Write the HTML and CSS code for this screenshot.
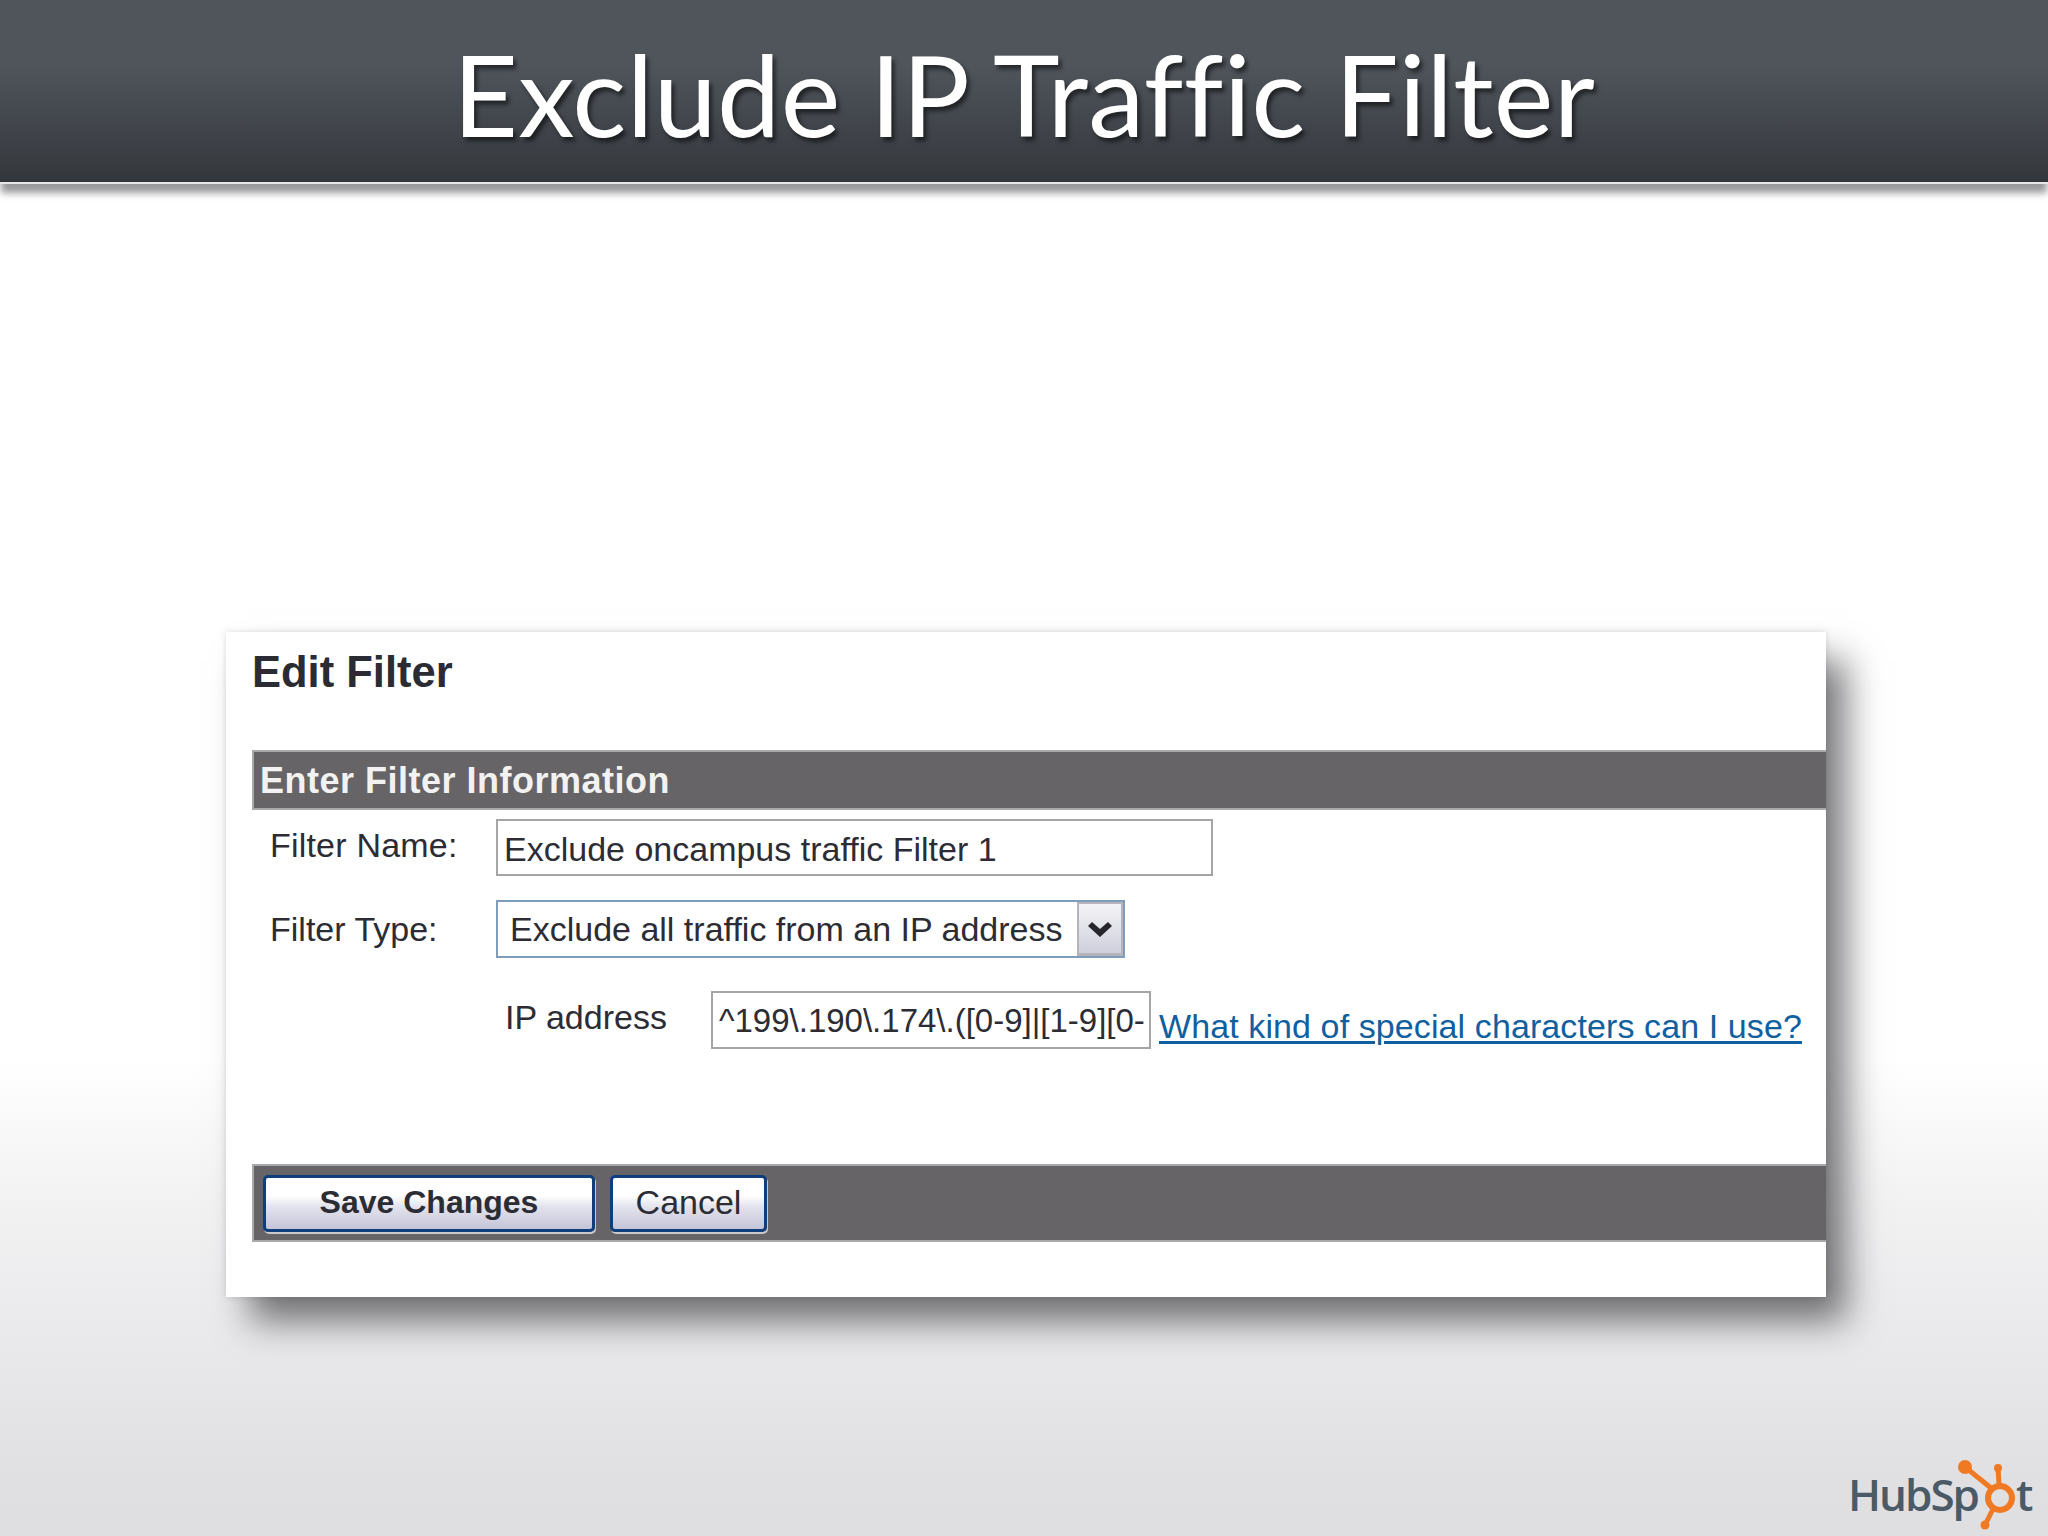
FILE: index.html
```html
<!DOCTYPE html>
<html>
<head>
    <title>Exclude IP Traffic Filter</title>
    <link rel="stylesheet" href="styles.css">
</head>
<body>
    <header class="slide-head">
        <h1>Exclude IP Traffic Filter</h1>
    </header>

    <section class="card">
        <h2 class="card-title">Edit Filter</h2>
        <div class="bar info-bar">Enter Filter Information</div>

        <div class="row name-row">
            <span class="label name-label">Filter Name:</span>
            <div class="field name-field">Exclude oncampus traffic Filter 1</div>
        </div>

        <div class="row type-row">
            <span class="label">Filter Type:</span>
            <div class="select">
                <span class="select-text">Exclude all traffic from an IP address</span>
                <span class="select-btn">
                    <svg width="26" height="18" viewBox="0 0 26 18"><path d="M1 6l4-4 8 7 8-7 4 4-12 11z" fill="#26262c"/></svg>
                </span>
            </div>
        </div>

        <div class="row ip-row">
            <span class="ip-label">IP address</span>
            <div class="field ip-field">^199\.190\.174\.([0-9]|[1-9][0-</div>
            <a class="help-link" href="#">What kind of special characters can I use?</a>
        </div>

        <div class="bar button-bar">
            <button class="btn save-btn">Save Changes</button>
            <button class="btn">Cancel</button>
        </div>
    </section>

    <div class="logo">
        <span class="logo-word">HubSp</span><span class="logo-o"></span><span>t</span>
        <svg class="sprocket" width="68" height="72" viewBox="0 0 68 72">
            <g fill="none" stroke="#f07a24" stroke-width="5">
                <circle cx="45" cy="40" r="12" stroke-width="6"/>
                <path d="M10 9l26 21M43 10l1 16M30 67l8-16"/>
            </g>
            <g fill="#f07a24">
                <circle cx="10" cy="9" r="7"/>
                <circle cx="43" cy="10" r="4"/>
                <circle cx="30" cy="67" r="4.5"/>
            </g>
        </svg>
    </div>
</body>
</html>
```

FILE: styles.css
```css
html, body {
    margin: 0;
    height: 100%;
}
body {
    position: relative;
    width: 2048px;
    height: 1536px;
    overflow: hidden;
    font-family: "Liberation Sans", Arial, sans-serif;
    color: #2c2c34;
    background: linear-gradient(to bottom, #fff 0, #fff 1060px, #f3f3f4 1190px, #e0e0e3 1480px, #dfdfe2 100%);
}
.slide-head {
    height: 182px;
    border-bottom: 2px solid #e8e8ea;
    background: linear-gradient(to bottom, #50555c 0, #50555c 35%, #33373c 100%);
    box-shadow: 0 10px 7px -1px rgba(70, 70, 75, 0.55);
    text-align: center;
}
.slide-head h1 {
    margin: 0;
    padding-top: 26px;
    font-family: Lato, "Open Sans", sans-serif;
    font-size: 113px;
    font-weight: 400;
    font-variant-ligatures: none;
    letter-spacing: 0.35px;
    line-height: 135px;
    color: #fff;
    text-shadow: 3px 4px 4px rgba(0, 0, 0, 0.55);
}
.card {
    box-sizing: border-box;
    width: 1600px;
    height: 665px;
    margin: 448px 0 0 226px;
    padding-left: 26px;
    background: #fff;
    box-shadow: 22px 26px 34px -2px rgba(30, 30, 35, 0.6), 0 0 6px rgba(120, 120, 125, 0.25);
}
.card-title {
    margin: 0;
    padding-top: 15px;
    height: 118px;
    box-sizing: border-box;
    font-size: 43.5px;
    font-weight: 700;
    line-height: 50px;
    color: #2b2b33;
}
.bar {
    box-sizing: border-box;
    background: #666466;
    border: 2px solid #a9a9ab;
    border-right: 0;
}
.info-bar {
    height: 60px;
    padding-left: 6px;
    font-size: 36px;
    font-weight: 700;
    line-height: 58px;
    letter-spacing: 0.5px;
    color: #f2f2f2;
}
.row {
    display: flex;
    align-items: center;
}
.label {
    width: 244px;
    padding-left: 18px;
    box-sizing: border-box;
    font-size: 34px;
    color: #2c2c34;
}
.name-label {
    margin-top: -4px;
    letter-spacing: 0.2px;
}
.field {
    box-sizing: border-box;
    height: 57px;
    background: #fff;
    border: 2.5px solid #a5a5a8;
    font-size: 34px;
    line-height: 56px;
    white-space: nowrap;
    overflow: hidden;
}
.name-row {
    margin-top: 9px;
}
.name-field {
    width: 717px;
    padding-left: 6px;
}
.type-row {
    margin-top: 24px;
}
.select {
    box-sizing: border-box;
    display: flex;
    align-items: center;
    justify-content: space-between;
    width: 629px;
    height: 58px;
    padding-left: 12px;
    border: 2.5px solid #7f9db9;
    font-size: 34px;
}
.select-text {
    white-space: nowrap;
}
.select-btn {
    box-sizing: border-box;
    display: flex;
    align-items: center;
    justify-content: center;
    width: 46px;
    height: 100%;
    border: 2px solid #b4b4ba;
    border-bottom-width: 3px;
    background: linear-gradient(to bottom, #f4f4f7, #cfcfdc);
}
.ip-row {
    margin-top: 33px;
    padding-left: 253px;
}
.ip-label {
    width: 206px;
    font-size: 34px;
    margin-top: -6px;
}
.ip-field {
    width: 440px;
    height: 58px;
    padding-left: 6px;
    font-size: 33px;
    line-height: 56px;
    color: #2c2c34;
}
.help-link {
    margin-left: 8px;
    margin-top: 12px;
    font-size: 34px;
    line-height: 38px;
    letter-spacing: 0.1px;
    color: #10609f;
    text-decoration: underline;
    text-decoration-thickness: 3px;
    text-underline-offset: 3px;
    white-space: nowrap;
}
.button-bar {
    display: flex;
    align-items: center;
    gap: 15px;
    height: 78px;
    margin-top: 115px;
    padding-left: 9px;
}
.btn {
    box-sizing: border-box;
    height: 57px;
    width: 157px;
    padding: 0 0 2px;
    border: 3px solid #0e3f7c;
    border-radius: 5px;
    background: linear-gradient(to bottom, #fff 0, #fff 35%, #e4e4ee 55%, #c5c4d8 100%);
    box-shadow: 1px 2px 0 #c9c9cc;
    font-family: "Liberation Sans", Arial, sans-serif;
    font-size: 34px;
    color: #2c2c34;
}
.save-btn {
    width: 332px;
    font-weight: 700;
    font-size: 32px;
}
.logo {
    position: absolute;
    left: 1848px;
    top: 1464px;
    display: flex;
    align-items: baseline;
    font-family: "Open Sans", sans-serif;
    font-size: 44px;
    font-weight: 600;
    line-height: 60px;
    color: #4a5a66;
}
.logo-word {
    letter-spacing: -2px;
}
.logo-o {
    width: 38px;
}
.sprocket {
    position: absolute;
    left: 107px;
    top: -6px;
}
```
